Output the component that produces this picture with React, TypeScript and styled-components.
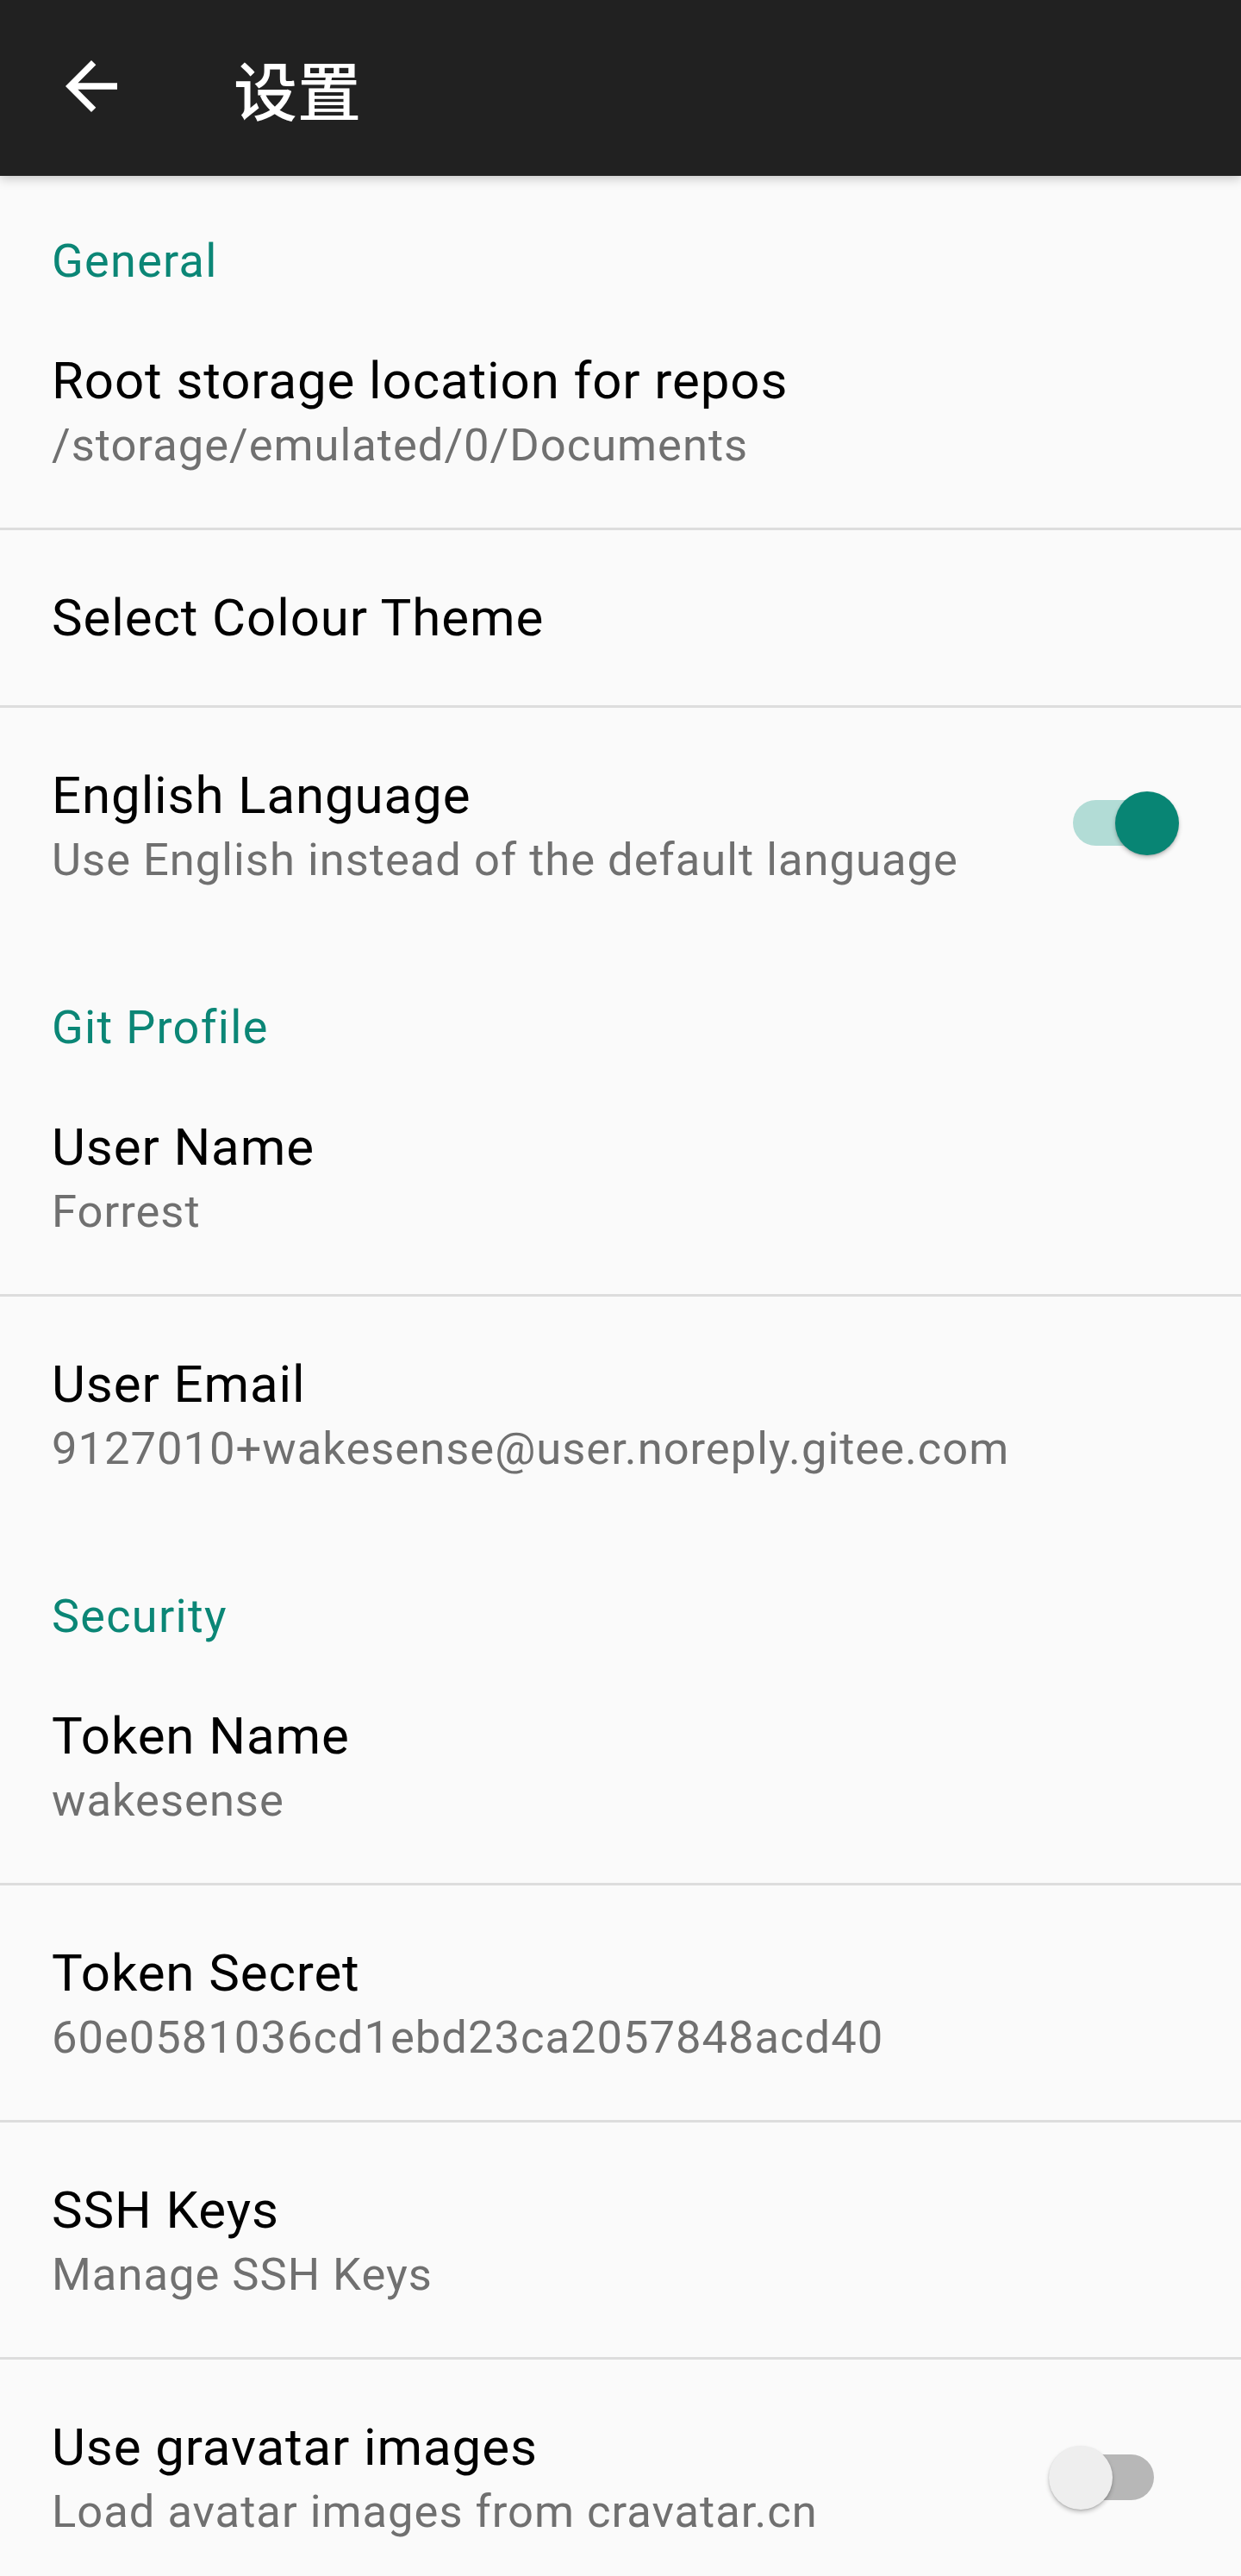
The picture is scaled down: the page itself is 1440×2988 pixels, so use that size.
import React from "react";
import styled, { createGlobalStyle } from "styled-components";

const GlobalStyle = createGlobalStyle`
  html, body {
    margin: 0;
    padding: 0;
    background: #fafafa;
  }
  body {
    font-family: Roboto, "Noto Sans CJK SC", sans-serif;
    -webkit-font-smoothing: antialiased;
  }
`;

const Screen = styled.div`
  width: 1440px;
  height: 2988px;
  overflow: hidden;
  background: #fafafa;
  display: flex;
  flex-direction: column;
`;

const AppBar = styled.header`
  height: 204px;
  flex-shrink: 0;
  background: #212121;
  display: flex;
  align-items: center;
  padding-left: 61px;
  box-shadow: 0 3px 12px rgba(0, 0, 0, 0.22);
  position: relative;
  z-index: 1;
`;

const BackButton = styled.button`
  width: 90px;
  height: 90px;
  padding: 0;
  margin: 0 0 4px 0;
  border: none;
  background: transparent;
  display: flex;
  align-items: center;
  justify-content: center;
  cursor: pointer;
`;

const AppTitle = styled.h1`
  margin: 0 0 0 120px;
  font-family: "Noto Sans CJK SC", sans-serif;
  font-weight: 500;
  font-size: 74px;
  line-height: 1;
  color: #ffffff;
`;

const List = styled.main`
  display: flex;
  flex-direction: column;
`;

const SectionLabel = styled.div`
  padding: 69px 60px 7px;
  font-size: 54px;
  line-height: 60px;
  letter-spacing: 1.3px;
  color: #0b8676;
`;

const Row = styled.div<{ $divider?: boolean }>`
  display: flex;
  align-items: center;
  padding: 62px 0 61px 60px;
  border-bottom: ${(p) => (p.$divider ? "3px solid #dddddd" : "0 none")};
`;

const TextBlock = styled.div`
  flex: 1;
  min-width: 0;
  display: flex;
  flex-direction: column;
`;

const Title = styled.div`
  font-size: 60px;
  line-height: 80px;
  letter-spacing: 0.9px;
  color: #000000;
  white-space: nowrap;
`;

const Summary = styled.div`
  font-size: 52.5px;
  line-height: 69px;
  letter-spacing: 1px;
  color: #707070;
  white-space: nowrap;
`;

const Track = styled.div<{ $on: boolean; $inset: number; $lift: number }>`
  position: relative;
  flex-shrink: 0;
  width: 112px;
  height: 53px;
  border-radius: 27px;
  margin-right: ${(p) => p.$inset}px;
  margin-bottom: ${(p) => p.$lift}px;
  background: ${(p) => (p.$on ? "#b2dcd6" : "#b7b7b7")};
`;

const Thumb = styled.span<{ $on: boolean }>`
  position: absolute;
  top: -10.5px;
  left: ${(p) => (p.$on ? "48.5px" : "-10.5px")};
  width: 74px;
  height: 74px;
  border-radius: 50%;
  background: ${(p) => (p.$on ? "#088574" : "#eeeeee")};
  box-shadow: 0 3px 5px rgba(0, 0, 0, 0.22), 0 1px 2px rgba(0, 0, 0, 0.12);
`;

type SwitchProps = { on: boolean; inset: number; lift: number };

const Switch = ({ on, inset, lift }: SwitchProps) => (
  <Track $on={on} $inset={inset} $lift={lift} role="switch" aria-checked={on}>
    <Thumb $on={on} />
  </Track>
);

type Pref = {
  title: string;
  summary?: string;
  divider?: boolean;
  toggle?: SwitchProps;
};

type Section = { label: string; items: Pref[] };

const sections: Section[] = [
  {
    label: "General",
    items: [
      {
        title: "Root storage location for repos",
        summary: "/storage/emulated/0/Documents",
        divider: true,
      },
      { title: "Select Colour Theme", divider: true },
      {
        title: "English Language",
        summary: "Use English instead of the default language",
        toggle: { on: true, inset: 83, lift: 6 },
      },
    ],
  },
  {
    label: "Git Profile",
    items: [
      { title: "User Name", summary: "Forrest", divider: true },
      {
        title: "User Email",
        summary: "9127010+wakesense@user.noreply.gitee.com",
      },
    ],
  },
  {
    label: "Security",
    items: [
      { title: "Token Name", summary: "wakesense", divider: true },
      {
        title: "Token Secret",
        summary: "60e0581036cd1ebd23ca2057848acd40",
        divider: true,
      },
      { title: "SSH Keys", summary: "Manage SSH Keys", divider: true },
      {
        title: "Use gravatar images",
        summary: "Load avatar images from cravatar.cn",
        toggle: { on: false, inset: 101, lift: 0 },
      },
    ],
  },
];

const BackArrow = () => (
  <svg width="90" height="90" viewBox="0 0 24 24" aria-hidden="true">
    <path
      fill="#ffffff"
      d="M20 11H7.83l5.59-5.59L12 4l-8 8 8 8 1.41-1.41L7.83 13H20v-2z"
    />
  </svg>
);

export default function App() {
  return (
    <>
      <GlobalStyle />
      <Screen>
        <AppBar>
          <BackButton aria-label="Back">
            <BackArrow />
          </BackButton>
          <AppTitle>设置</AppTitle>
        </AppBar>
        <List>
          {sections.map((s) => (
            <React.Fragment key={s.label}>
              <SectionLabel>{s.label}</SectionLabel>
              {s.items.map((it) => (
                <Row key={it.title} $divider={it.divider}>
                  <TextBlock>
                    <Title>{it.title}</Title>
                    {it.summary && <Summary>{it.summary}</Summary>}
                  </TextBlock>
                  {it.toggle && <Switch {...it.toggle} />}
                </Row>
              ))}
            </React.Fragment>
          ))}
        </List>
      </Screen>
    </>
  );
}
